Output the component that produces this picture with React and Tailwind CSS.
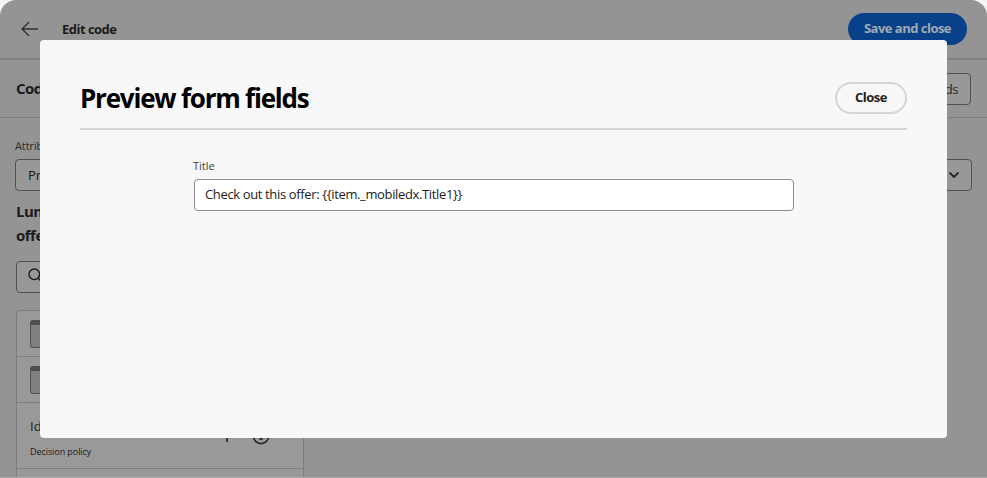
import React from 'react';

function Header() {
  return (
    <header className="flex h-[60px] shrink-0 items-center justify-between border-b-2 border-[#828282] pl-[21px] pr-5">
      <div className="flex items-center">
        <svg className="h-4 w-[18px]" viewBox="0 0 18 16" fill="none" stroke="#303030" strokeWidth="1.4" strokeLinecap="round" strokeLinejoin="round">
          <path d="M16.6 8H1M7.6 1.5 1 8l6.600 6.500" />
        </svg>
        <span className="ml-[23px] pt-px text-[13px] font-bold tracking-[-0.52px] text-[#1b1b1b]">Edit code</span>
      </div>
      <button className="h-8 w-[119px] whitespace-nowrap rounded-full bg-[#08418a] text-[13px] font-bold tracking-[-0.52px] text-[#a3a9b0]">Save and close</button>
    </header>
  );
}

function ListRow() {
  return (
    <div className="flex h-[46px] shrink-0 items-center border-b border-[#7d7d7d] pl-[13px]">
      <div className="h-7 w-9 rounded-[3px] border border-t-[5px] border-[#4f4f4f] bg-[#808080]" />
    </div>
  );
}

function Page() {
  return (
    <div className="flex h-[477px] flex-col overflow-hidden rounded-t-[16px] bg-[#949494]">
      <Header />
      <div className="flex h-[58px] shrink-0 items-center justify-between border-b border-[#7f7f7f] px-4">
        <h2 className="text-[15px] font-bold tracking-[-0.5px] text-[#1b1b1b]">Code</h2>
        <button className="h-8 w-[110px] rounded-[4px] border border-[#515151] bg-[#989898] pr-3 pt-0.5 text-right text-[13px] tracking-[-0.5px] text-[#262626]">Fields</button>
      </div>
      <div className="px-[15px] pt-5">
        <div className="h-4 text-[11px] leading-4 tracking-[-0.1px] text-[#2b2b2b]">Attribute</div>
        <div className="mt-[5px] flex h-8 items-center justify-between rounded-[4px] border border-[#515151] bg-[#989898] pl-3 pr-[11px] text-[13px] text-[#1b1b1b]">
          <span className="pt-px">Profile</span>
          <svg className="h-[14px] w-3" viewBox="0 0 12 14" fill="none" stroke="#272727" strokeWidth="1.8" strokeLinecap="round" strokeLinejoin="round">
            <path d="m2 5 4 4 4-4" />
          </svg>
        </div>
      </div>
      <div className="pl-4 pt-2">
        <h3 className="w-24 text-[15px] font-bold leading-6 tracking-[-0.5px] text-[#1b1b1b]">Luma<br />offers</h3>
        <div className="mt-[14px] flex h-8 w-[288px] items-center rounded-[4px] border border-[#515151] bg-[#989898] pl-[11px]">
          <svg className="mb-1 h-4 w-4" viewBox="0 0 16 16" fill="none" stroke="#1b1b1b" strokeWidth="1.4" strokeLinecap="round">
            <circle cx="6.300" cy="7.300" r="5.300" />
            <path d="m10.200 11.200 4 4" />
          </svg>
        </div>
        <div className="mt-[17px] flex h-[200px] w-[288px] flex-col rounded-t-[4px] border border-[#7d7d7d] bg-[#999]">
          <ListRow />
          <ListRow />
          <div className="flex h-[66px] shrink-0 border-b border-[#7d7d7d] pl-[13px] pt-[13px]">
            <div className="w-[189px]">
              <div className="text-[13px] leading-5 text-[#1b1b1b]">Id</div>
              <div className="mt-2 text-[9px] leading-4 tracking-[-0.07px] text-[#1b1b1b]">Decision policy</div>
            </div>
            <svg className="mt-[11px] h-4 w-4" viewBox="0 0 16 16" stroke="#272727" strokeWidth="1.700">
              <path d="M8 2v13M1.500 8.500h13" />
            </svg>
            <svg className="ml-[17px] mt-[11px] h-[18px] w-[18px]" viewBox="0 0 18 18" fill="none" stroke="#272727" strokeWidth="1.700">
              <circle cx="9" cy="9" r="7.600" />
              <path d="M7 12h4M9 8v4M9 4.500V6" />
            </svg>
          </div>
        </div>
      </div>
    </div>
  );
}

function PreviewDialog() {
  return (
    <section className="absolute left-10 top-10 h-[398px] w-[907px] rounded-[4px] bg-[#f8f8f8] px-10 pt-10">
      <div className="flex h-[50px] items-start justify-between border-b-2 border-[#d5d5d5] pt-[2px]">
        <h1 className="whitespace-nowrap text-[26px] font-bold leading-[33px] tracking-[-1.21px] text-black">Preview form fields</h1>
        <button className="h-8 w-[72px] rounded-full border-2 border-[#d5d5d5] pb-px text-[13px] font-bold leading-none tracking-[-0.45px] text-[#222]">Close</button>
      </div>
      <div className="ml-[114px] mt-7 w-[600px]">
        <label className="-ml-px block h-4 text-[11px] leading-4 text-[#3c3c3c]">Title</label>
        <div className="mt-[5px] flex h-8 items-center rounded-[4px] border border-[#8e8e8e] bg-white pb-px pl-[10px] text-[13px] tracking-[-0.36px] text-[#1c1c1c]">
          {'Check out this offer: {{item._mobiledx.Title1}}'}
        </div>
      </div>
    </section>
  );
}

export default function App() {
  return (
    <main className="relative h-[478px] w-[987px] overflow-hidden bg-[#f5f5f5] font-['Open_Sans','Noto_Sans',sans-serif]">
      <Page />
      <div className="h-px bg-[#aaa]" />
      <PreviewDialog />
    </main>
  );
}
